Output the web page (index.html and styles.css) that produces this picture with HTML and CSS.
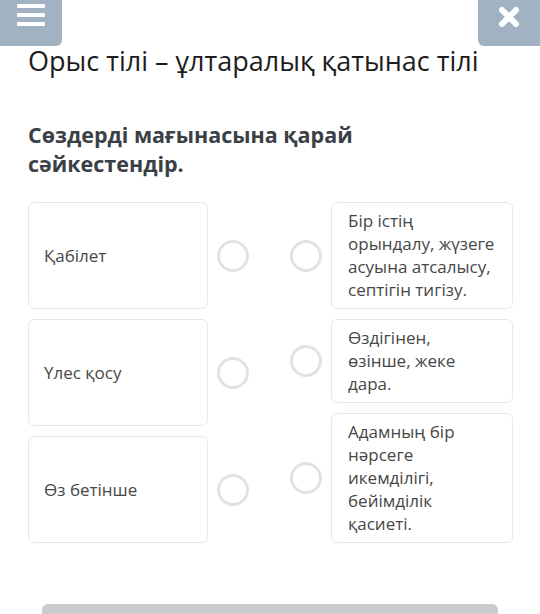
FILE: index.html
```html
<!DOCTYPE html>
<html lang="kk">
<head>
    <meta charset="UTF-8">
    <meta name="viewport" content="width=device-width, initial-scale=1.0">
    <title>Сәйкестендір</title>
    <link rel="stylesheet" href="styles.css">
</head>
<body>
    <header class="topbar">
        <button class="top-btn menu-btn" aria-label="Мәзір">
            <svg width="28" height="26" viewBox="0 0 28 26">
                <rect x="0" y="4" width="28" height="4" rx="1" fill="#fff"/>
                <rect x="0" y="13" width="28" height="4" rx="1" fill="#fff"/>
                <rect x="0" y="22" width="28" height="4" rx="1" fill="#fff"/>
            </svg>
        </button>
        <button class="top-btn close-btn" aria-label="Жабу">
            <svg width="22" height="22" viewBox="0 0 22 22">
                <path d="M4 4 L18 18 M18 4 L4 18" stroke="#fff" stroke-width="6" stroke-linecap="round"/>
            </svg>
        </button>
    </header>

    <main class="quiz">
        <h1 class="quiz-title">Орыс тілі – ұлтаралық қатынас тілі</h1>
        <h2 class="quiz-question">Сөздерді мағынасына қарай сәйкестендір.</h2>

        <div class="match">
            <div class="match-col left">
                <div class="match-row">
                    <div class="card">Қабілет</div>
                    <span class="dot"></span>
                </div>
                <div class="match-row">
                    <div class="card">Үлес қосу</div>
                    <span class="dot"></span>
                </div>
                <div class="match-row">
                    <div class="card">Өз бетінше</div>
                    <span class="dot"></span>
                </div>
            </div>

            <div class="match-col right">
                <div class="match-row">
                    <span class="dot"></span>
                    <div class="card">Бір істің орындалу, жүзеге асуына атсалысу, септігін тигізу.</div>
                </div>
                <div class="match-row">
                    <span class="dot"></span>
                    <div class="card">Өздігінен, өзінше, жеке дара.</div>
                </div>
                <div class="match-row">
                    <span class="dot"></span>
                    <div class="card">Адамның бір нәрсеге икемділігі, бейімділік қасиеті.</div>
                </div>
            </div>
        </div>
    </main>

    <footer class="bottom">
        <div class="bottom-bar"></div>
    </footer>
</body>
</html>
```

FILE: styles.css
```css
/* Globals */
body {
    font-family: "Open Sans", "Noto Sans", sans-serif;
    margin: 0;
    padding: 0;
    background-color: #fff;
    color: #222;
}

/* Top buttons */
.topbar {
    display: flex;
    justify-content: space-between;
    align-items: flex-start;
    height: 46px;
}
.top-btn {
    border: none;
    padding: 0;
    height: 46px;
    background-color: #a1b3c2;
    display: flex;
    justify-content: center;
}
.menu-btn {
    width: 62px;
    border-radius: 0 0 6px 0;
    align-items: flex-start;
}
.close-btn {
    width: 62px;
    border-radius: 0 0 0 6px;
    align-items: flex-start;
    padding-top: 6px;
}

/* Quiz */
.quiz {
    padding: 0 27px 0 28px;
}
.quiz-title {
    margin: -3px 0 0;
    font-size: 27px;
    font-weight: 400;
    line-height: 36px;
    color: #1c1c1c;
}
.quiz-question {
    margin: 41px 0 0;
    font-size: 21.5px;
    font-weight: 700;
    line-height: 29px;
    color: #3b4046;
    max-width: 380px;
}

/* Matching block */
.match {
    display: flex;
    justify-content: space-between;
    margin-top: 24px;
}
.match-col {
    display: flex;
    flex-direction: column;
    gap: 10px;
}
.match-col.left .match-row {
    flex: 1;
}
.match-row {
    display: flex;
    align-items: center;
    gap: 9px;
}
.match-col.left .card {
    width: 180px;
    align-self: stretch;
    display: flex;
    align-items: center;
    padding-left: 15px;
}
.match-col.right .card {
    width: 182px;
}
.card {
    box-sizing: border-box;
    border: 1px solid #e8e8e8;
    border-radius: 6px;
    padding: 6px 15px 7px 16px;
    font-size: 17px;
    line-height: 23px;
    color: #474747;
}
.dot {
    box-sizing: border-box;
    width: 32px;
    height: 32px;
    border: 3px solid #e2e2e2;
    border-radius: 50%;
    flex-shrink: 0;
}

/* Bottom */
.bottom {
    padding: 61px 42px 0;
}
.bottom-bar {
    height: 40px;
    background-color: #cbcbcb;
    border-radius: 6px 6px 0 0;
}
```
